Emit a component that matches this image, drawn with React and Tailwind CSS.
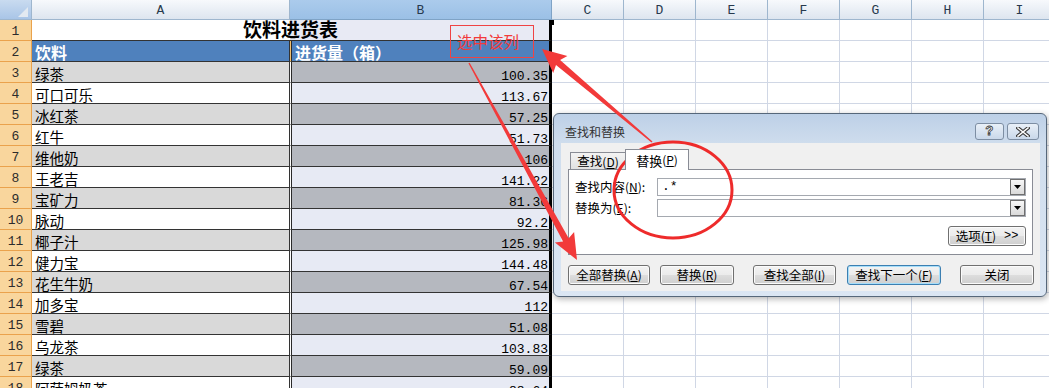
import React from "react";

const drinks = [
  ["绿茶", "100.35"],
  ["可口可乐", "113.67"],
  ["冰红茶", "57.25"],
  ["红牛", "51.73"],
  ["维他奶", "106"],
  ["王老吉", "141.22"],
  ["宝矿力", "81.36"],
  ["脉动", "92.2"],
  ["椰子汁", "125.98"],
  ["健力宝", "144.48"],
  ["花生牛奶", "67.54"],
  ["加多宝", "112"],
  ["雪碧", "51.08"],
  ["乌龙茶", "103.83"],
  ["绿茶", "59.09"],
  ["阿萨姆奶茶", "88.64"],
];

const extraCols = ["C", "D", "E", "F", "G", "H", "I"];

const cjk = "font-['Noto_Sans_CJK_SC',sans-serif]";
const mono = "font-['Liberation_Mono',monospace]";

// tapered snagit-style arrow, thin tail -> fat head
function arrowPts(x1, y1, x2, y2, head = 22, wing = 10, shaft = 2.8, tail = 0.6) {
  const len = Math.hypot(x2 - x1, y2 - y1);
  const ux = (x2 - x1) / len;
  const uy = (y2 - y1) / len;
  const nx = -uy;
  const ny = ux;
  const bx = x2 - ux * head;
  const by = y2 - uy * head;
  const pts = [
    [x1 + nx * tail, y1 + ny * tail],
    [bx + ux * 3 + nx * shaft, by + uy * 3 + ny * shaft],
    [bx + nx * wing, by + ny * wing],
    [x2, y2],
    [bx - nx * wing, by - ny * wing],
    [bx + ux * 3 - nx * shaft, by + uy * 3 - ny * shaft],
    [x1 - nx * tail, y1 - ny * tail],
  ];
  return pts.map((p) => p.map((v) => v.toFixed(1)).join(",")).join(" ");
}

function RowHead({ n }) {
  return (
    <div className={`w-[32px] shrink-0 flex items-center justify-center pt-[3px] border-r border-b border-[#eaa24c] bg-[#f9d69d] text-[13px] leading-[15px] text-[#2c2c2c] ${mono}`}>
      {n}
    </div>
  );
}

function BlankCells() {
  return extraCols.map((c) => (
    <div key={c} className="w-[72px] shrink-0 border-r border-b border-[#d0d7e5] bg-white" />
  ));
}

function Acc({ k }) {
  return (
    <span className="text-[12px]">
      (<span className="underline underline-offset-[1px]">{k}</span>)
    </span>
  );
}

function Btn({ w, focus, children }) {
  return (
    <div
      className={`${w} h-[20px] shrink-0 rounded-[3px] border flex items-center justify-center text-[12.5px] leading-none text-black bg-[linear-gradient(to_bottom,#f3f3f3_0%,#ebebeb_50%,#dddddd_51%,#cfcfcf_100%)] ${
        focus
          ? "border-[#3c7fb1] shadow-[inset_0_0_0_1px_#a6defa]"
          : "border-[#707070] shadow-[inset_0_0_0_1px_#fbfbfb]"
      }`}
    >
      {children}
    </div>
  );
}

function Combo({ value }) {
  return (
    <div className="w-[369px] h-[18px] border border-[#a5a9b0] bg-white flex items-center">
      <span className={`flex-1 pl-[4px] text-[13px] leading-[14px] ${mono}`}>{value}</span>
      <div className="w-[15px] h-[16px] border border-[#6f6f6f] bg-[linear-gradient(to_bottom,#f7f7f7,#dadada)] flex items-center justify-center">
        <svg width="7" height="4" viewBox="0 0 7 4">
          <polygon points="0,0 7,0 3.5,4" fill="#000" />
        </svg>
      </div>
    </div>
  );
}

export default function App() {
  return (
    <div className={`relative w-[1049px] h-[388px] overflow-hidden bg-white ${cjk}`}>
      {/* column headers */}
      <div className="flex h-[20px]">
        <div className="w-[32px] shrink-0 border-r border-b border-[#9eb6ce] bg-[linear-gradient(to_bottom,#c9dbf0,#a9c5e7)] flex items-end justify-end pr-[3px] pb-[2px]">
          <div className="w-0 h-0 border-l-[10px] border-l-transparent border-b-[10px] border-b-[#e2e9f1]" />
        </div>
        <div className={`w-[258px] shrink-0 border-r border-b border-[#9eb6ce] bg-[linear-gradient(to_bottom,#f7f9fc,#dde5ef)] flex justify-center pt-[4px] text-[13px] leading-[14px] text-[#27394d] ${mono}`}>
          A
        </div>
        <div className={`w-[262px] shrink-0 border-r border-b border-[#7fa3c6] bg-[linear-gradient(to_bottom,#abcbec,#9bc0e6)] flex justify-center pt-[4px] text-[13px] leading-[14px] text-[#27394d] ${mono}`}>
          B
        </div>
        {extraCols.map((c) => (
          <div
            key={c}
            className={`w-[72px] shrink-0 border-r border-b border-[#9eb6ce] bg-[linear-gradient(to_bottom,#f7f9fc,#dde5ef)] flex justify-center pt-[4px] text-[13px] leading-[14px] text-[#27394d] ${mono}`}
          >
            {c}
          </div>
        ))}
      </div>

      {/* row 1: merged title */}
      <div className="flex h-[21px]">
        <RowHead n={1} />
        <div className="w-[520px] shrink-0 border-b border-b-[#333] border-r-[3px] border-r-black bg-[linear-gradient(to_right,#ffffff_258px,#e8eaf4_258px)] flex items-center justify-center pb-[3px] text-[19px] leading-[20px] font-bold text-black">
          饮料进货表
        </div>
        <BlankCells />
      </div>

      {/* row 2: header */}
      <div className="flex h-[21px]">
        <RowHead n={2} />
        <div className="w-[258px] shrink-0 border-r border-b border-[#333] bg-[#4f81bd] flex items-center pt-[3px] pl-[3px] text-[16px] leading-[17px] font-bold text-white">
          饮料
        </div>
        <div className="w-[262px] shrink-0 border-b border-b-[#333] border-l border-l-[#f0c070] border-r-[3px] border-r-black shadow-[inset_1px_0_0_#2a2a2a] bg-[#4f81bd] flex items-center pt-[3px] pl-[4px] text-[16px] leading-[17px] font-bold text-white">
          进货量（箱）
        </div>
        <BlankCells />
      </div>

      {drinks.map(([name, qty], i) => {
        const shaded = i % 2 === 0;
        return (
          <div key={i} className="flex h-[21px]">
            <RowHead n={i + 3} />
            <div
              className={`w-[258px] shrink-0 border-r border-b border-[#333] flex items-center pt-[4px] pl-[3px] text-[14.5px] leading-[16px] text-black ${
                shaded ? "bg-[#d9d9d9]" : "bg-white"
              }`}
            >
              {name}
            </div>
            <div
              className={`w-[262px] shrink-0 border-b border-b-[#333] border-l border-l-white border-r-[3px] border-r-black shadow-[inset_1px_0_0_#2a2a2a] pt-[8px] pr-[1px] text-right text-[13px] leading-[13px] text-black ${mono} ${
                shaded ? "bg-[#b5b8bf]" : "bg-[#e7eaf4]"
              }`}
            >
              {qty}
            </div>
            <BlankCells />
          </div>
        );
      })}

      {/* selection fill handle */}
      <div className="absolute left-[549px] top-[20px] w-[5px] h-[5px] bg-black" />

      {/* find & replace dialog */}
      <div className="absolute left-[553px] top-[113px] w-[494px] h-[184px] rounded-[6px] border border-[#56677a] bg-[linear-gradient(to_bottom,#bdd0e7,#cfdded_30px,#dbe6f3)] shadow-[1px_2px_6px_rgba(0,0,0,0.3)]">
        <div className="h-[29px] flex items-start pl-[11px] pr-[7px]">
          <span className="mt-[9px] text-[12px] leading-[17px] text-[#333]">查找和替换</span>
          <div className="ml-auto mt-[9px] flex gap-[3px]">
            <div className="w-[29px] h-[17px] rounded-[3px] border border-[#7d8ea3] bg-[linear-gradient(to_bottom,#e9f0f8,#c9d8ea)] flex items-center justify-center">
              <span className={`text-[13px] leading-none font-bold text-white [-webkit-text-stroke:0.8px_#3a3a3a] ${mono}`}>?</span>
            </div>
            <div className="w-[32px] h-[17px] rounded-[3px] border border-[#7d8ea3] bg-[linear-gradient(to_bottom,#e9f0f8,#c9d8ea)] flex items-center justify-center">
              <svg width="14" height="10" viewBox="0 0 14 10">
                <path d="M2 1 L12 9 M12 1 L2 9" stroke="#3a3a3a" strokeWidth="3.6" strokeLinecap="square" />
                <path d="M2 1 L12 9 M12 1 L2 9" stroke="#ffffff" strokeWidth="1.6" strokeLinecap="square" />
              </svg>
            </div>
          </div>
        </div>

        <div className="ml-[7px] w-[479px] h-[148px] bg-[#f0f0f0] pt-[6px]">
          <div className="flex items-end h-[20px] ml-[9px]">
            <div className="w-[55px] h-[17px] border-l border-t border-[#898c95] bg-[linear-gradient(to_bottom,#f3f3f3,#e1e1e1)] flex items-center justify-center pt-[1px] text-[12.5px] leading-none">
              查找<Acc k="D" />
            </div>
            <div className="relative z-10 -mb-[1px] w-[64px] h-[21px] border-l border-t border-r border-[#898c95] bg-white flex items-center justify-center text-[13px] leading-none">
              替换<Acc k="P" />
            </div>
          </div>

          <div className="ml-[7px] w-[465px] h-[86px] border border-[#898c95] bg-white pt-[8px] pl-[6px] pr-[6px] flex flex-col">
            <div className="flex items-center">
              <span className="w-[82px] text-[12.5px] leading-none">
                查找内容<Acc k="N" />:
              </span>
              <Combo value=".*" />
            </div>
            <div className="flex items-center mt-[3px]">
              <span className="w-[82px] text-[12.5px] leading-none">
                替换为<Acc k="E" />:
              </span>
              <Combo value="" />
            </div>
            <div className="flex justify-end mt-[9px]">
              <Btn w="w-[78px]">
                选项<Acc k="T" />
                <span className={`ml-[8px] text-[12px] ${mono}`}>&gt;&gt;</span>
              </Btn>
            </div>
          </div>

          <div className="flex mt-[10px] ml-[7px]">
            <Btn w="w-[82px]">
              全部替换<Acc k="A" />
            </Btn>
            <div className="ml-[10px]">
              <Btn w="w-[74px]">
                替换<Acc k="R" />
              </Btn>
            </div>
            <div className="ml-[19px]">
              <Btn w="w-[83px]">
                查找全部<Acc k="I" />
              </Btn>
            </div>
            <div className="ml-[11px]">
              <Btn w="w-[94px]" focus>
                查找下一个<Acc k="F" />
              </Btn>
            </div>
            <div className="ml-[19px]">
              <Btn w="w-[74px]">关闭</Btn>
            </div>
          </div>
        </div>
      </div>

      {/* annotations */}
      <svg className="absolute inset-0 pointer-events-none" width="1049" height="388" viewBox="0 0 1049 388">
        <polygon points={arrowPts(652, 142, 542, 49, 24, 11, 3.2, 0.7)} fill="#f23a3a" />
        <polygon points={arrowPts(469, 63, 577, 260, 26, 11, 3.2, 0.7)} fill="#f23a3a" />
        <ellipse cx="673" cy="190" rx="59" ry="48" fill="none" stroke="#ee2b2b" strokeWidth="3" />
      </svg>

      <div className="absolute left-[450px] top-[25px] w-[84px] h-[33px] border border-[#ef4444] flex items-center pl-[6px] text-[15.5px] leading-none text-[#f23a3a]">
        选中该列
      </div>
    </div>
  );
}
